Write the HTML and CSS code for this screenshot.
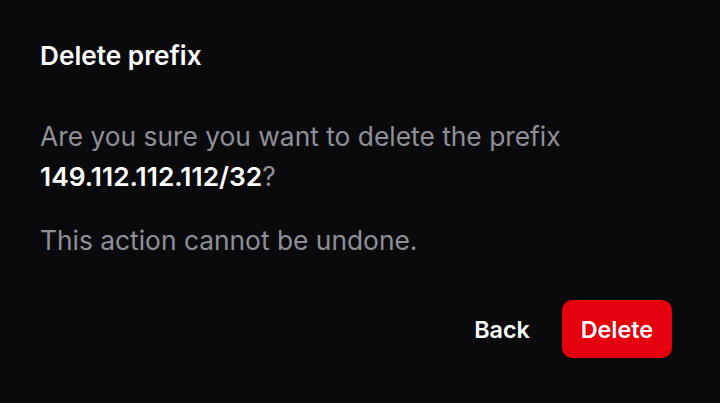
FILE: index.html
```html
<!DOCTYPE html>
<html>
<head>
<meta charset="utf-8">
<link rel="stylesheet" href="styles.css">
</head>
<body>
<div class="dialog">
  <h2 class="title">Delete prefix</h2>
  <p class="text">Are you sure you want to delete the prefix <strong class="hl">149.112.112.112/32</strong>?</p>
  <p class="text note">This action cannot be undone.</p>
  <div class="actions">
    <button class="btn back">Back</button>
    <button class="btn danger">Delete</button>
  </div>
</div>
</body>
</html>
```
FILE: styles.css
```css
html, body {
  margin: 0;
  padding: 0;
  background: #0a0a0c;
  height: 100%;
}
body {
  font-family: Inter, "Noto Sans", sans-serif;
  color: #fff;
}
.dialog {
  padding: 40px 48px 0 40px;
  display: flex;
  flex-direction: column;
}
.title {
  margin: 0;
  font-size: 26.2px;
  font-weight: 600;
  line-height: 32px;
}
.text {
  margin: 44px 0 0;
  font-size: 26.35px;
  line-height: 40px;
  color: #8f8f98;
  max-width: 600px;
}
.note {
  margin-top: 24px;
}
.hl {
  color: #fff;
  font-weight: 600;
}
.actions {
  display: flex;
  justify-content: flex-end;
  align-items: center;
  gap: 32px;
  margin-top: 40px;
}
.btn {
  font-family: Inter, "Noto Sans", sans-serif;
  font-size: 23.3px;
  font-weight: 600;
  border: none;
  color: #fff;
  background: transparent;
  cursor: pointer;
}
.back {
  padding: 0;
}
.danger {
  background: #e5000e;
  border-radius: 10px;
  height: 58px;
  padding: 0 19px;
}
```
